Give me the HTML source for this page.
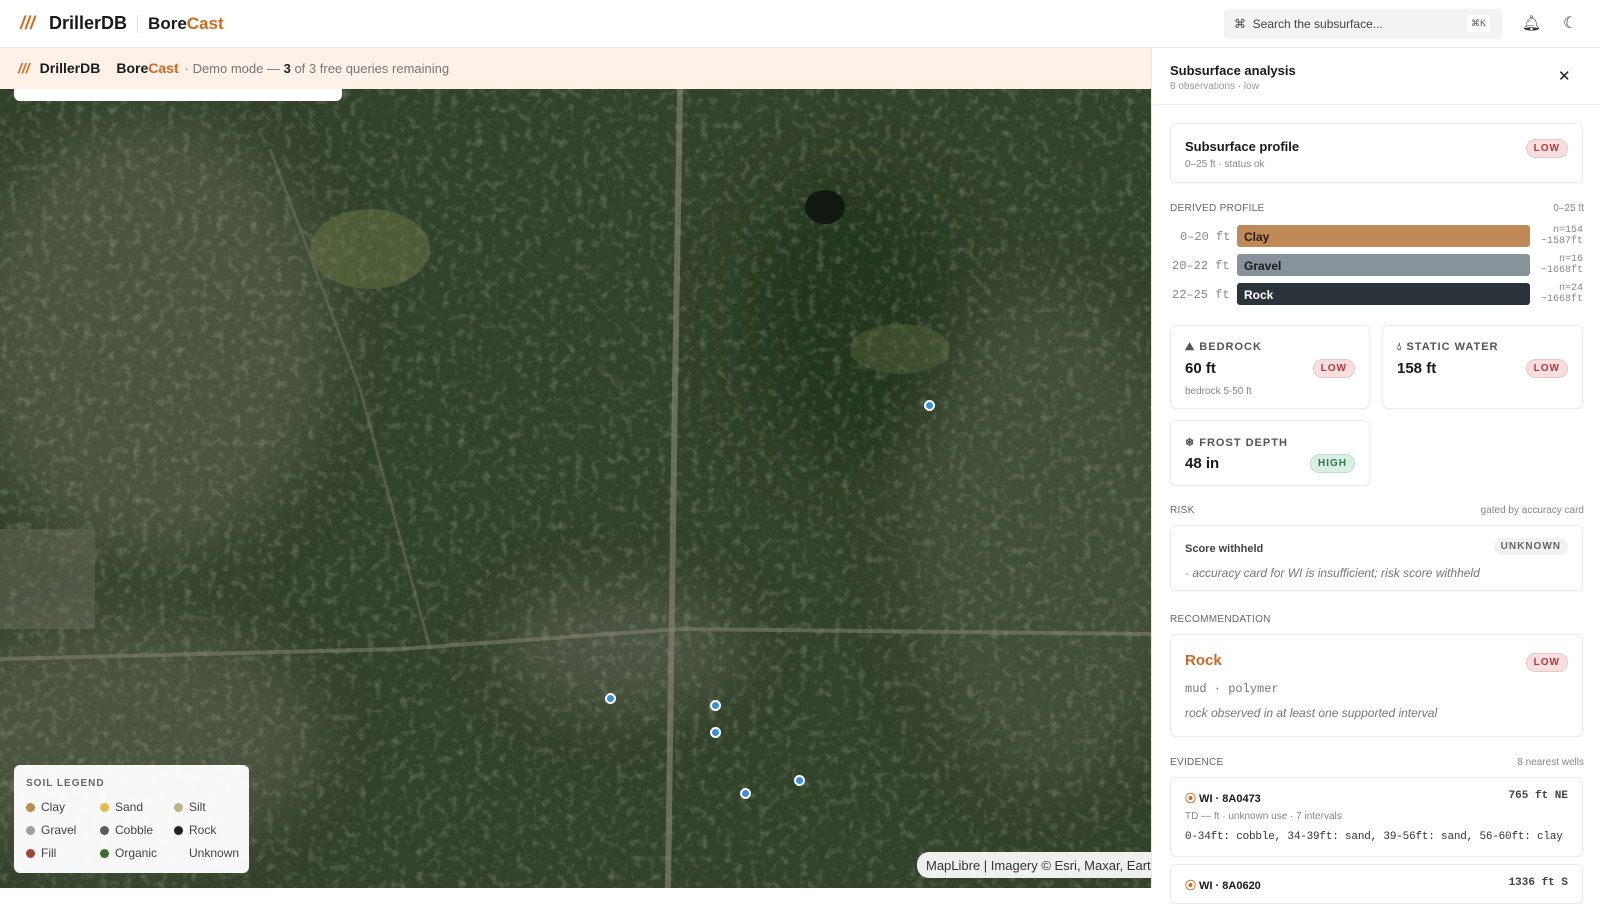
<!DOCTYPE html>
<html><head><meta charset="utf-8"><style>
*{box-sizing:border-box;margin:0;padding:0}
body{width:1600px;height:888px;overflow:hidden;font-family:"Liberation Sans",sans-serif;background:#fff;color:#1a1a1a;position:relative}
.hdr{position:absolute;left:0;top:0;width:1600px;height:48px;border-bottom:1px solid #ececec;background:#fff}
.logo{position:absolute;display:flex;align-items:center;font-weight:bold}
.or{color:#d2691e}
.search{position:absolute;left:1224px;top:9px;width:278px;height:30px;background:#f3f3f3;border-radius:5px;font-size:12px;color:#444;padding:8px 10px}
.kbd{position:absolute;right:12px;top:6px;background:#fff;border-radius:3px;font-size:9px;padding:3px 4px;color:#555}
.banner{position:absolute;left:0;top:48px;width:1151px;height:41px;background:#fdf1e8}
.map{position:absolute;left:0;top:89px;width:1151px;height:799px;background:#34432c;overflow:hidden}
.panel{position:absolute;left:1151px;top:48px;width:449px;height:840px;background:#fff;border-left:1px solid #e8e8e8}
.card{position:absolute;border:1px solid #ececec;border-radius:6px;background:#fff;box-shadow:0 1px 2px rgba(0,0,0,.04)}
.pill{position:absolute;border-radius:10px;font-size:10px;font-weight:bold;letter-spacing:1px;padding:3px 7px}
.low{background:#f8dede;color:#b33a3a;border:1px solid #eec5c5}
.high{background:#d9efe3;color:#2f7a52;border:1px solid #bfe0cc}
.sec{position:absolute;font-size:10px;color:#666;letter-spacing:.3px}
.secr{position:absolute;font-size:10px;color:#888;right:16px}
.mono{font-family:"Liberation Mono",monospace}
.bar{position:absolute;left:67px;width:293px;height:22px;border-radius:3px;font-size:12px;font-weight:bold;padding:5px 7px;font-family:"Liberation Sans",sans-serif}
.lab{position:absolute;font-size:11px;font-weight:bold;letter-spacing:1px;color:#555}
.val{position:absolute;font-size:15px;font-weight:bold}
.sm{position:absolute;font-size:10px;color:#888}
.dot{position:absolute;width:11px;height:11px;border-radius:50%;background:#3a8fd6;border:2px solid #fff}
.leg{position:absolute;left:14px;top:765px;width:235px;height:108px;background:rgba(255,255,255,.96);border-radius:6px;font-size:12px;color:#444}
.li{position:absolute;display:flex;align-items:center;gap:6px}
.li i{width:9px;height:9px;border-radius:50%;display:inline-block}
</style></head><body>
<div class="hdr">
 <div class="logo" style="left:20px;top:13px;font-size:18px"><span class="or" style="font-size:18px;margin-right:14px;font-style:italic">///</span>DrillerDB<span style="border-left:1px solid #ddd;height:18px;margin:0 10px"></span><span style="font-size:17px">Bore<span class="or">Cast</span></span></div>
 <div class="search">⌘ &nbsp;Search the subsurface...<span class="kbd">⌘K</span></div>
 <div style="position:absolute;left:1522px;top:14px;font-size:15px;color:#333">🔔︎</div>
 <div style="position:absolute;left:1563px;top:13px;font-size:16px;color:#333">☾</div>
</div>
<div class="banner">
 <div class="logo" style="left:18px;top:12px;font-size:14px"><span class="or" style="margin-right:10px;font-style:italic">///</span>DrillerDB<span style="margin-left:16px">Bore<span class="or">Cast</span></span><span style="font-weight:normal;color:#777;font-size:13px;margin-left:6px">· Demo mode — <b style="color:#222">3</b> of 3 free queries remaining</span></div>
</div>
<div class="map">
<svg width="1151" height="799" style="position:absolute;left:0;top:0">
 <defs>
  <filter id="n"><feTurbulence type="fractalNoise" baseFrequency="0.12" numOctaves="2" seed="4"/><feColorMatrix values="0 0 0 0 0.5  0 0 0 0 0.58  0 0 0 0 0.42  0 0 0 1.6 -0.8"/></filter>
  <filter id="b"><feGaussianBlur stdDeviation="30"/></filter>
 </defs>
 <rect width="1151" height="799" fill="#33422b"/>
 <g filter="url(#b)" opacity=".6">
  <ellipse cx="150" cy="250" rx="180" ry="220" fill="#5b624c"/>
  <ellipse cx="120" cy="650" rx="200" ry="120" fill="#5b6150"/>
  <ellipse cx="1050" cy="450" rx="140" ry="250" fill="#4d5840"/>
  <ellipse cx="620" cy="560" rx="120" ry="60" fill="#5e6354"/>
  <ellipse cx="850" cy="230" rx="110" ry="150" fill="#1f2e18"/>
 </g>
 <rect width="1151" height="799" filter="url(#n)" opacity=".45"/>
 <path d="M680 0 L675 300 L668 799" stroke="#8a8a78" stroke-width="6" fill="none" opacity=".6"/>
 <path d="M0 570 L400 560 L680 540 L1151 545" stroke="#8a8a78" stroke-width="4" fill="none" opacity=".5"/>
 <path d="M270 60 L360 300 L430 560" stroke="#8a8a78" stroke-width="3" fill="none" opacity=".35"/>
 <ellipse cx="370" cy="160" rx="60" ry="40" fill="#6e7d48" opacity=".45"/>
 <ellipse cx="900" cy="260" rx="50" ry="25" fill="#5f6f40" opacity=".4"/>
 <rect x="0" y="440" width="95" height="100" fill="#7a7a70" opacity=".35"/>
 <ellipse cx="825" cy="118" rx="20" ry="17" fill="#101810"/>
</svg>
<div style="position:absolute;left:14px;top:-2px;width:328px;height:14px;background:#fff;border-radius:0 0 6px 6px"></div>
<div class="dot" style="left:924px;top:311px"></div>
<div class="dot" style="left:605px;top:604px"></div>
<div class="dot" style="left:710px;top:611px"></div>
<div class="dot" style="left:710px;top:638px"></div>
<div class="dot" style="left:794px;top:686px"></div>
<div class="dot" style="left:740px;top:699px"></div>
<div style="position:absolute;left:917px;top:763px;width:240px;height:26px;background:rgba(255,255,255,.92);border-radius:12px 0 0 12px;font-size:13px;color:#333;padding:6px 9px;white-space:nowrap">MapLibre | Imagery © Esri, Maxar, Earth</div>
</div>
<div class="leg" style="top:765px">
 <div style="position:absolute;left:12px;top:13px;font-size:10px;font-weight:bold;letter-spacing:1px;color:#666">SOIL LEGEND</div>
 <div class="li" style="left:12px;top:35px"><i style="background:#c38a4c"></i>Clay</div>
 <div class="li" style="left:86px;top:35px"><i style="background:#e6b94a"></i>Sand</div>
 <div class="li" style="left:160px;top:35px"><i style="background:#c0b08a"></i>Silt</div>
 <div class="li" style="left:12px;top:58px"><i style="background:#9aa0a0"></i>Gravel</div>
 <div class="li" style="left:86px;top:58px"><i style="background:#5a5f5e"></i>Cobble</div>
 <div class="li" style="left:160px;top:58px"><i style="background:#222"></i>Rock</div>
 <div class="li" style="left:12px;top:81px"><i style="background:#9a4536"></i>Fill</div>
 <div class="li" style="left:86px;top:81px"><i style="background:#3f6b2f"></i>Organic</div>
 <div class="li" style="left:175px;top:81px">Unknown</div>
</div>
<div class="panel">
 <div style="position:absolute;left:18px;top:15px;font-size:13px;font-weight:bold">Subsurface analysis</div>
 <div style="position:absolute;left:18px;top:33px;font-size:10px;color:#999">8 observations · low</div>
 <div style="position:absolute;left:406px;top:19px;font-size:15px">✕</div>
 <div style="position:absolute;left:0;top:56px;width:449px;border-top:1px solid #eee"></div>
 <div class="card" style="left:18px;top:75px;width:413px;height:60px">
  <div style="position:absolute;left:14px;top:15px;font-size:13px;font-weight:bold">Subsurface profile</div>
  <div class="sm" style="left:14px;top:35px">0–25 ft · status ok</div>
  <div class="pill low" style="right:14px;top:15px">LOW</div>
 </div>
 <div class="sec" style="left:18px;top:155px">DERIVED PROFILE</div><div class="secr" style="top:155px">0–25 ft</div>
 <div class="mono" style="position:absolute;left:18px;top:182px;width:413px;font-size:12px;color:#888">
  <div style="position:absolute;left:10px;top:0">0–20 ft</div>
  <div style="position:absolute;left:2px;top:29px">20–22 ft</div>
  <div style="position:absolute;left:2px;top:58px">22–25 ft</div>
  <div class="bar" style="top:-5px;background:#c08a58;color:#2a1a0a">Clay</div>
  <div class="bar" style="top:24px;background:#87939a;color:#1a1a1a">Gravel</div>
  <div class="bar" style="top:53px;background:#2b343b;color:#fff">Rock</div>
  <div style="position:absolute;left:355px;top:-5px;width:58px;text-align:right;font-size:10px;line-height:11px">n=154<br>~1587ft</div>
  <div style="position:absolute;left:355px;top:24px;width:58px;text-align:right;font-size:10px;line-height:11px">n=16<br>~1668ft</div>
  <div style="position:absolute;left:355px;top:53px;width:58px;text-align:right;font-size:10px;line-height:11px">n=24<br>~1668ft</div>
 </div>
 <div class="card" style="left:18px;top:277px;width:200px;height:84px">
  <div class="lab" style="left:14px;top:15px">⛰ BEDROCK</div><div class="val" style="left:14px;top:34px">60 ft</div>
  <div class="pill low" style="right:14px;top:33px">LOW</div><div class="sm" style="left:14px;top:60px">bedrock 5-50 ft</div>
 </div>
 <div class="card" style="left:230px;top:277px;width:201px;height:84px">
  <div class="lab" style="left:14px;top:15px">💧︎ STATIC WATER</div><div class="val" style="left:14px;top:34px">158 ft</div>
  <div class="pill low" style="right:14px;top:33px">LOW</div>
 </div>
 <div class="card" style="left:18px;top:372px;width:200px;height:66px">
  <div class="lab" style="left:14px;top:15px">❄ FROST DEPTH</div><div class="val" style="left:14px;top:34px">48 in</div>
  <div class="pill high" style="right:14px;top:33px">HIGH</div>
 </div>
 <div class="sec" style="left:18px;top:457px">RISK</div><div class="secr" style="top:457px">gated by accuracy card</div>
 <div class="card" style="left:18px;top:477px;width:413px;height:66px">
  <div style="position:absolute;left:14px;top:17px;font-size:11px;font-weight:bold;color:#444">Score withheld</div>
  <div class="pill" style="right:14px;top:12px;background:#f1f1f1;color:#666">UNKNOWN</div>
  <div style="position:absolute;left:14px;top:40px;font-size:12px;font-style:italic;color:#777">· accuracy card for WI is insufficient; risk score withheld</div>
 </div>
 <div class="sec" style="left:18px;top:566px">RECOMMENDATION</div>
 <div class="card" style="left:18px;top:586px;width:413px;height:103px">
  <div style="position:absolute;left:14px;top:17px;font-size:15px;font-weight:bold;color:#cc6a2e">Rock</div>
  <div class="pill low" style="right:14px;top:18px">LOW</div>
  <div class="mono" style="position:absolute;left:14px;top:47px;font-size:12px;color:#777">mud · polymer</div>
  <div style="position:absolute;left:14px;top:71px;font-size:12px;font-style:italic;color:#777">rock observed in at least one supported interval</div>
 </div>
 <div class="sec" style="left:18px;top:709px">EVIDENCE</div><div class="secr" style="top:709px">8 nearest wells</div>
 <div class="card" style="left:18px;top:729px;width:413px;height:80px">
  <div style="position:absolute;left:14px;top:12px;font-size:11px;font-weight:bold"><span class="or">⦿</span> WI · 8A0473</div>
  <div class="mono" style="position:absolute;right:14px;top:12px;font-size:11px;font-weight:bold;color:#444">765 ft NE</div>
  <div class="sm" style="left:14px;top:33px">TD — ft · unknown use · 7 intervals</div>
  <div class="mono" style="position:absolute;left:14px;top:53px;font-size:11px;color:#333;letter-spacing:-.2px">0-34ft: cobble, 34-39ft: sand, 39-56ft: sand, 56-60ft: clay</div>
 </div>
 <div class="card" style="left:18px;top:816px;width:413px;height:40px">
  <div style="position:absolute;left:14px;top:12px;font-size:11px;font-weight:bold"><span class="or">⦿</span> WI · 8A0620</div>
  <div class="mono" style="position:absolute;right:14px;top:12px;font-size:11px;font-weight:bold;color:#444">1336 ft S</div>
 </div>
</div>
</body></html>
